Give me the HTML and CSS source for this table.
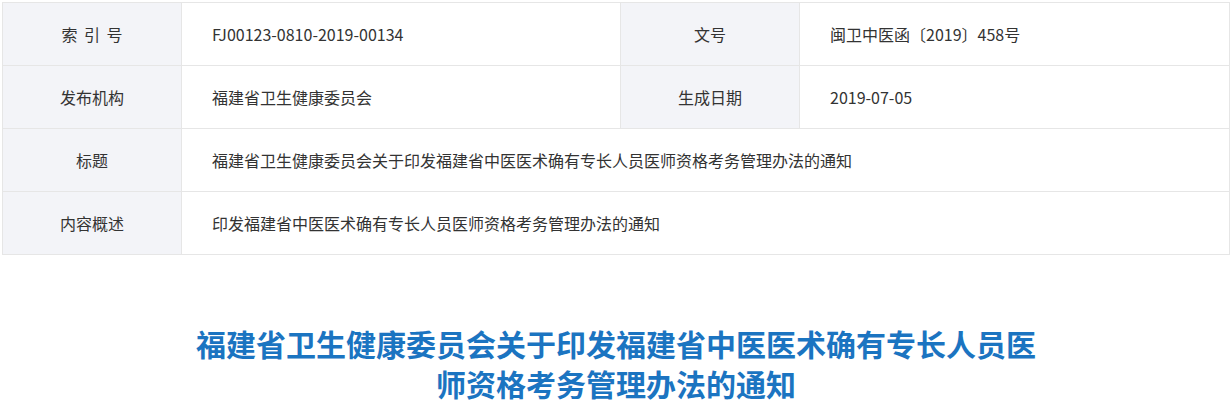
FILE: index.html
```html
<!DOCTYPE html>
<html lang="zh-CN">
<head>
  <meta charset="UTF-8">
  <meta name="viewport" content="width=device-width, initial-scale=1.0">
  <title>福建省卫生健康委员会关于印发福建省中医医术确有专长人员医师资格考务管理办法的通知</title>
  <link rel="stylesheet" href="styles.css">
</head>
<body>

<div class="content">
  <!-- Document meta info -->
  <table class="info-table">
    <colgroup>
      <col class="col-label">
      <col class="col-value">
      <col class="col-label">
      <col>
    </colgroup>
    <tbody>
      <tr>
        <th class="spaced">索 引 号</th>
        <td>FJ00123-0810-2019-00134</td>
        <th>文号</th>
        <td>闽卫中医函〔2019〕458号</td>
      </tr>
      <tr>
        <th>发布机构</th>
        <td>福建省卫生健康委员会</td>
        <th>生成日期</th>
        <td>2019-07-05</td>
      </tr>
      <tr>
        <th>标题</th>
        <td colspan="3">福建省卫生健康委员会关于印发福建省中医医术确有专长人员医师资格考务管理办法的通知</td>
      </tr>
      <tr>
        <th>内容概述</th>
        <td colspan="3">印发福建省中医医术确有专长人员医师资格考务管理办法的通知</td>
      </tr>
    </tbody>
  </table>

  <!-- Article title -->
  <h1 class="article-title">福建省卫生健康委员会关于印发福建省中医医术确有专长人员医师资格考务管理办法的通知</h1>
</div>

</body>
</html>
```

FILE: styles.css
```css
body {
  font-family: "Microsoft YaHei", "Noto Sans CJK SC", "Noto Sans", sans-serif;
  background-color: #fff;
  color: #333;
  margin: 0;
  padding: 0;
}

.content {
  padding: 2px 2px 0 2px;
}

.info-table {
  width: 1228px;
  border-collapse: collapse;
  table-layout: fixed;
  font-size: 16px;
}

.col-label {
  width: 179px;
}

.col-value {
  width: 439px;
}

.info-table th,
.info-table td {
  border: 1px solid #e6e6e6;
  height: 63px;
  padding: 0;
  font-weight: normal;
  box-sizing: border-box;
}

.info-table th {
  background-color: #f3f4f8;
  text-align: center;
}

.info-table th.spaced {
  word-spacing: 3px;
}

.info-table td {
  text-align: left;
  padding-left: 30px;
}

.article-title {
  width: 860px;
  margin: 68px auto 0;
  text-align: center;
  font-size: 30px;
  line-height: 40px;
  font-weight: bold;
  color: #1b74c1;
}
```
